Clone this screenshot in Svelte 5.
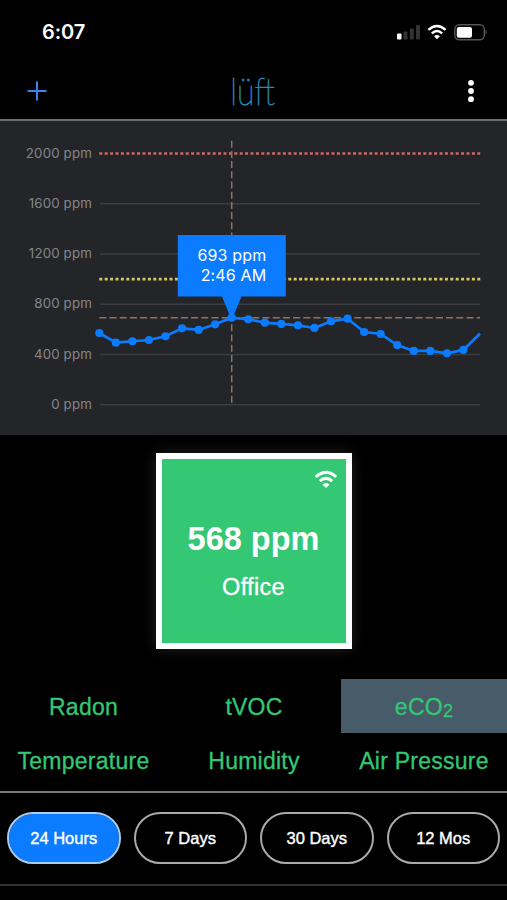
<script>
  const ticks = [2000, 1600, 1200, 800, 400, 0];
  const readings = [
    571, 494, 505, 515, 545, 608, 595, 640, 693, 680, 653, 643, 632, 611, 664,
    685, 579, 563, 475, 428, 428, 409, 436, 567,
  ];
  const selected = 8;
  const left = 99.3;
  const right = 480;
  const step = (right - left) / (readings.length - 1);

  const x = (i) => left + i * step;
  const y = (ppm) => 283.7 - ppm * 0.1256;

  const line = readings.map((ppm, i) => `${x(i)},${y(ppm)}`).join(" ");

  let metric = "eco2";
  let range = "24 Hours";

  const metrics = [
    { id: "radon", label: "Radon" },
    { id: "tvoc", label: "tVOC" },
    { id: "eco2", label: "eCO", sub: "2" },
    { id: "temperature", label: "Temperature" },
    { id: "humidity", label: "Humidity" },
    { id: "pressure", label: "Air Pressure" },
  ];
  const ranges = ["24 Hours", "7 Days", "30 Days", "12 Mos"];
</script>

{#snippet wifi()}
  <path d="M1.4 5.9 Q10 -1.9 18.6 5.9" />
  <path d="M4.8 9.4 Q10 4.7 15.2 9.4" />
  <path class="tip" d="M7 12.2 Q10 9.6 13 12.2 L10 15.2 Z" />
{/snippet}

<main>
  <div class="status">
    <time>6:07</time>
    <div class="indicators">
      <svg class="signal" width="24" height="16" viewBox="0 0 24 16">
        <rect x="1" y="9.5" width="4.5" height="6" rx="1" fill="#fff" />
        <rect x="7.5" y="7.5" width="4" height="8" rx="1" />
        <rect x="13.8" y="4.5" width="4" height="11" rx="1" />
        <rect x="20" y="1" width="4" height="14.5" rx="1" />
      </svg>
      <svg class="wifi" width="20" height="16" viewBox="0 0 20 16">
        {@render wifi()}
      </svg>
      <svg width="34" height="17" viewBox="0 0 34 17">
        <rect
          x="0.8"
          y="0.8"
          width="29.5"
          height="15"
          rx="4.5"
          fill="none"
          stroke="#555"
          stroke-width="1.4"
        />
        <rect x="2.8" y="3" width="15.2" height="10.8" rx="2" fill="#fff" />
        <path d="M31.5 5.6 Q34 8.3 31.5 11 Z" fill="#555" />
      </svg>
    </div>
  </div>

  <header>
    <button class="add" aria-label="Add device">
      <svg width="20" height="20" viewBox="0 0 20 20">
        <path d="M10 0.5 V19.5 M0.5 10 H19.5" stroke="#3d82f3" stroke-width="2" />
      </svg>
    </button>
    <svg class="logo" width="60" height="50" viewBox="0 0 60 50">
      <text x="9.3" y="39" textLength="44.5" lengthAdjust="spacingAndGlyphs">lüft</text>
    </svg>
    <button class="more" aria-label="More">
      <svg width="8" height="24" viewBox="0 0 8 24" fill="#fff">
        <circle cx="4" cy="3.8" r="2.9" />
        <circle cx="4" cy="12" r="2.9" />
        <circle cx="4" cy="20.2" r="2.9" />
      </svg>
    </button>
  </header>

  <svg class="chart" width="507" height="314" viewBox="0 0 507 314">
    {#each ticks as tick}
      <text class="tick" x="92" y={y(tick) + 4.2}>{tick} ppm</text>
      {#if tick < 2000}
        <line class="grid" x1={left + 0.7} x2={right} y1={y(tick)} y2={y(tick)} />
      {/if}
    {/each}

    <line class="limit high" x1={left} x2={right + 1} y1={y(2000)} y2={y(2000)} />
    <line class="limit fair" x1={left} x2={right + 1} y1={y(1000)} y2={y(1000)} />

    <line
      class="cursor"
      x1={left}
      x2={right}
      y1={y(readings[selected])}
      y2={y(readings[selected])}
    />
    <line class="cursor" x1={x(selected)} x2={x(selected)} y1="19.7" y2={y(0)} />

    <polyline points={line} />
    {#each readings.slice(0, -1) as ppm, i}
      <circle cx={x(i)} cy={y(ppm)} r="4.1" />
    {/each}

    <g class="tooltip">
      <path d="M177.8 114 H285.8 V175.5 H241.5 L233 196 H230.4 L222 175.5 H177.8 Z" />
      <text x="266.3" y="140">{readings[selected]} ppm</text>
      <text x="266.3" y="159.5">2:46 AM</text>
    </g>
  </svg>

  <section class="reading">
    <div class="tile">
      <svg class="wifi" width="24" height="19" viewBox="0 0 20 16">
        {@render wifi()}
      </svg>
      <strong>568 ppm</strong>
      <span>Office</span>
    </div>
  </section>

  <nav class="metrics">
    {#each metrics as m}
      <button class:active={metric === m.id} on:click={() => (metric = m.id)}>
        <span>{m.label}{#if m.sub}<sub>{m.sub}</sub>{/if}</span>
      </button>
    {/each}
  </nav>

  <div class="ranges">
    {#each ranges as r}
      <button class:active={range === r} on:click={() => (range = r)}>{r}</button>
    {/each}
  </div>
</main>

<style>
  :global(body) {
    background: #000;
  }

  main {
    width: 507px;
    height: 900px;
    overflow: hidden;
    background: #000;
    color: #fff;
    font-family: "Liberation Sans", Arial, sans-serif;
  }

  svg {
    display: block;
  }

  button {
    padding: 0;
    border: 0;
    background: none;
    color: inherit;
    font: inherit;
  }

  .status {
    box-sizing: border-box;
    height: 62px;
    padding: 2px 19px 0 42px;
    display: flex;
    justify-content: space-between;
    align-items: center;
  }

  time {
    font: 600 20px Inter, sans-serif;
    letter-spacing: -0.1px;
  }

  .indicators {
    display: flex;
    align-items: center;
    gap: 7px;
  }

  .signal {
    fill: #333;
  }

  .wifi {
    fill: none;
    stroke: #fff;
    stroke-width: 2.5;
  }

  .wifi .tip {
    fill: #fff;
    stroke: none;
  }

  header {
    box-sizing: border-box;
    height: 59px;
    padding: 0 32px 0 27px;
    display: grid;
    grid-template-columns: 1fr 60px 1fr;
    align-items: center;
    border-bottom: 2px solid #6e6f71;
  }

  .more {
    justify-self: end;
  }

  .add {
    justify-self: start;
  }

  .logo text {
    fill: #238bb8;
    stroke: #238bb8;
    stroke-width: 0.9;
    font: 200 38.5px Lato, sans-serif;
  }

  .chart {
    background: #242529;
  }

  .tick {
    fill: #85868a;
    font: 400 13.3px Inter, sans-serif;
    letter-spacing: 0.15px;
    text-anchor: end;
  }

  .grid {
    stroke: #3b3d40;
    stroke-width: 1.4;
  }

  .limit {
    stroke-width: 2.7;
    stroke-dasharray: 3 2.4;
  }

  .high {
    stroke: #cc6866;
  }

  .fair {
    stroke: #d2c866;
  }

  .cursor {
    stroke: #8c7565;
    stroke-width: 1.5;
    stroke-dasharray: 7 3.2;
  }

  polyline {
    fill: none;
    stroke: #0b7bff;
    stroke-width: 2.7;
  }

  .chart circle,
  .tooltip {
    fill: #0b7bff;
  }

  .tooltip text {
    fill: #fff;
    font: 400 16px Inter, sans-serif;
    letter-spacing: 0.15px;
    text-anchor: end;
  }

  .reading {
    height: 244px;
    display: flex;
    justify-content: center;
  }

  .tile {
    box-sizing: border-box;
    width: 196px;
    height: 196px;
    margin-top: 18px;
    padding: 11px 8px 0;
    display: flex;
    flex-direction: column;
    align-items: center;
    border: 6px solid #fff;
    background: #34c774;
    box-shadow: 0 0 14px #222;
  }

  .tile .wifi {
    align-self: flex-end;
  }

  .tile strong {
    margin-top: 31px;
    font-size: 32.5px;
    line-height: 38px;
  }

  .tile span {
    margin-top: 16px;
    font-size: 23.5px;
    line-height: 26px;
    letter-spacing: 0.3px;
    -webkit-text-stroke: 0.3px;
  }

  .metrics {
    height: 112px;
    display: grid;
    grid-template-columns: 167px 174px 166px;
    grid-template-rows: 54px 54px;
    color: #34c774;
    font-size: 23px;
    letter-spacing: 0.25px;
    -webkit-text-stroke: 0.3px;
  }

  .metrics button {
    padding-top: 2px;
    letter-spacing: inherit;
  }

  .metrics button.active {
    background: #485b68;
  }

  sub {
    font-size: 18px;
    line-height: 0;
    vertical-align: -2px;
  }

  .ranges {
    box-sizing: border-box;
    height: 95px;
    padding: 19px 7px 0;
    display: grid;
    grid-template-columns: repeat(4, 1fr);
    gap: 13px;
    border-top: 2px solid #777;
    border-bottom: 2px solid #333;
  }

  .ranges button {
    height: 52px;
    padding-top: 1px;
    border: 2px solid #aaa;
    border-radius: 26px;
    font-size: 16.5px;
    -webkit-text-stroke: 0.4px;
  }

  .ranges button.active {
    border-color: #a9cdf5;
    background: #0b7bff;
    background-clip: padding-box;
  }
</style>
